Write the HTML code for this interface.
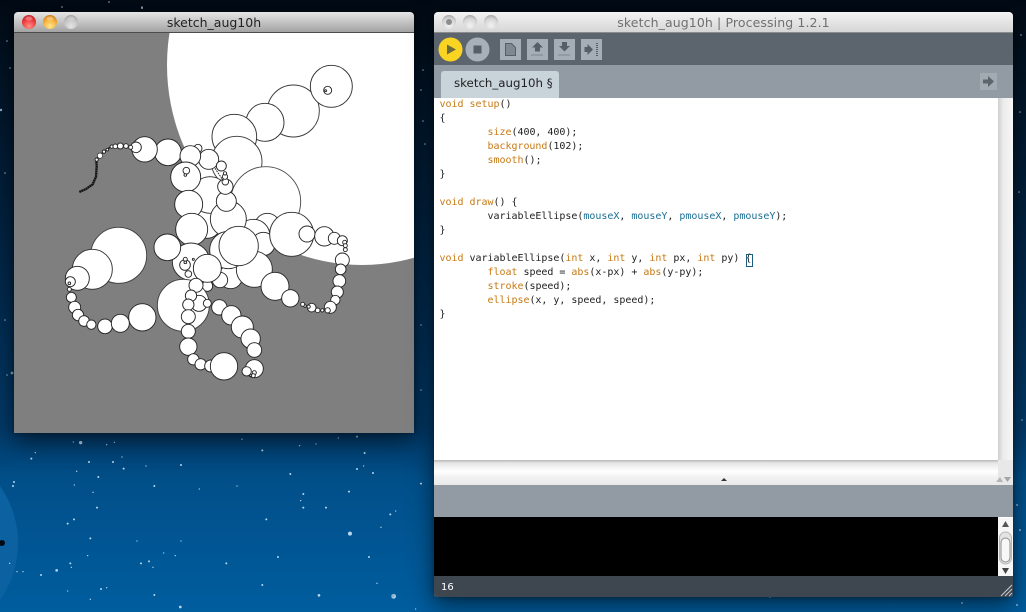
<!DOCTYPE html>
<html><head><meta charset="utf-8"><title>sketch_aug10h</title>
<style>
html,body{margin:0;padding:0}
body{width:1026px;height:612px;overflow:hidden;position:relative;background:linear-gradient(180deg,#020a14 0,#021222 60px,#021b33 150px,#022a4e 300px,#023a69 430px,#014f89 480px,#005d9e 612px);font-family:"DejaVu Sans",sans-serif}
.a{position:absolute}
#bg{position:absolute;left:0;top:0}
.title{position:absolute;top:12px;height:20px;line-height:21px;text-align:center;font-size:12.5px;white-space:pre}
#code{position:absolute;left:439.5px;top:98px;font:10px/14px "DejaVu Sans Mono",monospace;letter-spacing:-.025px;color:#222;white-space:pre;margin:0}
#code b{font-weight:normal;color:#c77a14}
#code i{font-style:normal;color:#1a6f95}
</style></head><body>
<svg id="bg" width="1026" height="612" viewBox="0 0 1026 612">
<circle cx="-81" cy="543" r="99" fill="#0c62a0"/>
<circle cx="2" cy="543" r="3" fill="#010a14"/>
<g fill="#b7d6ee" transform="translate(0,430) scale(.3333)">
<circle cx="242" cy="38" r="5"/><circle cx="220" cy="36" r="2"/><circle cx="320" cy="44" r="2"/><circle cx="343" cy="37" r="2"/><circle cx="106" cy="68" r="2"/><circle cx="94" cy="86" r="3"/><circle cx="267" cy="96" r="3"/><circle cx="339" cy="96" r="3"/><circle cx="366" cy="81" r="2"/><circle cx="371" cy="116" r="3"/><circle cx="438" cy="108" r="2"/><circle cx="543" cy="105" r="3"/><circle cx="230" cy="124" r="2"/><circle cx="295" cy="141" r="3"/><circle cx="42" cy="156" r="3"/><circle cx="39" cy="168" r="3"/><circle cx="463" cy="168" r="3"/><circle cx="223" cy="165" r="2"/><circle cx="279" cy="187" r="2"/><circle cx="598" cy="177" r="2"/><circle cx="711" cy="168" r="2"/><circle cx="787" cy="61" r="3"/><circle cx="726" cy="28" r="2"/><circle cx="899" cy="47" r="2"/><circle cx="948" cy="42" r="2"/><circle cx="1015" cy="24" r="2"/><circle cx="1071" cy="20" r="3"/><circle cx="1094" cy="69" r="3"/><circle cx="871" cy="132" r="3"/><circle cx="1071" cy="117" r="3"/><circle cx="1091" cy="108" r="2"/><circle cx="1119" cy="129" r="3"/><circle cx="1047" cy="185" r="3"/><circle cx="1263" cy="161" r="3"/><circle cx="910" cy="192" r="3"/><circle cx="902" cy="212" r="2"/><circle cx="910" cy="233" r="3"/><circle cx="978" cy="233" r="3"/><circle cx="1171" cy="253" r="3"/><circle cx="1187" cy="243" r="2"/><circle cx="1143" cy="292" r="2"/><circle cx="1050" cy="311" r="6"/><circle cx="799" cy="268" r="3"/><circle cx="291" cy="233" r="3"/><circle cx="222" cy="268" r="3"/><circle cx="203" cy="281" r="3"/><circle cx="271" cy="325" r="3"/><circle cx="411" cy="333" r="2"/><circle cx="543" cy="333" r="2"/><circle cx="491" cy="369" r="2"/><circle cx="526" cy="377" r="2"/><circle cx="263" cy="377" r="2"/><circle cx="447" cy="394" r="3"/><circle cx="423" cy="400" r="3"/><circle cx="459" cy="412" r="2"/><circle cx="679" cy="400" r="3"/><circle cx="834" cy="381" r="3"/><circle cx="211" cy="400" r="3"/><circle cx="214" cy="412" r="2"/><circle cx="170" cy="421" r="4"/><circle cx="123" cy="435" r="3"/><circle cx="51" cy="425" r="2"/><circle cx="69" cy="425" r="2"/><circle cx="29" cy="400" r="2"/><circle cx="303" cy="477" r="3"/><circle cx="320" cy="473" r="2"/><circle cx="203" cy="483" r="2"/><circle cx="463" cy="495" r="3"/><circle cx="271" cy="508" r="2"/><circle cx="787" cy="465" r="3"/><circle cx="957" cy="496" r="4"/><circle cx="1181" cy="499" r="7"/><circle cx="1131" cy="460" r="2"/><circle cx="1107" cy="381" r="3"/><circle cx="541" cy="531" r="4"/><circle cx="1247" cy="537" r="2"/>
</g>
<g fill="#8fb2cc">
<circle cx="142" cy="7" r=".8"/><circle cx="109" cy="2" r=".8"/><circle cx="62" cy="7" r=".8"/><circle cx="142" cy="8" r="1"/><circle cx="7" cy="41" r=".8"/><circle cx="1" cy="110" r="1.2"/><circle cx="10" cy="68" r=".8"/><circle cx="5" cy="173" r=".8"/><circle cx="423" cy="70" r=".8"/><circle cx="423" cy="121" r=".8"/><circle cx="425" cy="144" r=".8"/><circle cx="421" cy="90" r=".8"/><circle cx="1021" cy="35" r=".8"/><circle cx="1020" cy="112" r=".8"/><circle cx="1019" cy="192" r=".8"/><circle cx="1017" cy="505" r="1"/><circle cx="1020" cy="530" r="1"/><circle cx="1017" cy="605" r="1"/><circle cx="962" cy="603" r="1"/><circle cx="770" cy="597" r="1"/><circle cx="393" cy="596" r="1.6"/><circle cx="5" cy="320" r=".8"/><circle cx="12" cy="373" r="1.4"/><circle cx="7" cy="375" r=".8"/><circle cx="421" cy="325" r=".8"/><circle cx="421" cy="390" r=".8"/><circle cx="1022" cy="420" r=".8"/>
</g>
</svg>

<!-- sketch window -->
<div class="a" style="left:14px;top:12px;width:400px;height:421px;border-radius:5px 5px 0 0;box-shadow:0 8px 24px rgba(0,0,0,.55),0 0 6px rgba(0,0,0,.3);background:#7f7f7f"></div>
<div class="a" style="left:14px;top:12px;width:400px;height:20px;border-radius:4px 4px 0 0;background:linear-gradient(180deg,#e6e6e6,#c4c4c4 50%,#a3a3a3);border-bottom:1px solid #4c4c4c"></div>
<div class="title" style="left:14px;width:400px;color:#222">sketch_aug10h</div>

<svg class="a" style="left:0;top:0" width="1026" height="612" viewBox="0 0 1026 612">
<defs>
<radialGradient id="r" cx=".5" cy=".8" r=".8"><stop offset="0" stop-color="#ff8f88"/><stop offset=".6" stop-color="#ee3c3e"/><stop offset="1" stop-color="#c0282c"/></radialGradient>
<radialGradient id="o" cx=".5" cy=".8" r=".8"><stop offset="0" stop-color="#ffe88e"/><stop offset=".6" stop-color="#f6b03a"/><stop offset="1" stop-color="#c9801c"/></radialGradient>
<radialGradient id="g" cx=".5" cy=".8" r=".8"><stop offset="0" stop-color="#e4e4e4"/><stop offset=".6" stop-color="#c6c6c6"/><stop offset="1" stop-color="#a4a4a4"/></radialGradient>
<radialGradient id="g2" cx=".5" cy=".75" r=".75"><stop offset="0" stop-color="#f2f2f2"/><stop offset=".65" stop-color="#d6d6d6"/><stop offset="1" stop-color="#a8a8a8"/></radialGradient>
<clipPath id="c"><rect x="14" y="33" width="400" height="400"/></clipPath>
</defs>
<circle cx="29" cy="22" r="7" fill="url(#r)"/><ellipse cx="29" cy="18.5" rx="3.5" ry="2" fill="#fff" opacity=".3"/>
<circle cx="50" cy="22" r="7" fill="url(#o)"/><ellipse cx="50" cy="18.5" rx="3.5" ry="2" fill="#fff" opacity=".3"/>
<circle cx="71" cy="22" r="7" fill="url(#g)"/><ellipse cx="71" cy="18.5" rx="3.5" ry="2" fill="#fff" opacity=".2"/>
<g clip-path="url(#c)">
<ellipse cx="362" cy="65" rx="195" ry="200" fill="#fff"/>
<g fill="#fff" stroke="#262626" stroke-width="2.8" transform="scale(.33333)">
<circle cx="880" cy="333" r="78" stroke="#3c3c3c"/><circle cx="994" cy="259" r="63" stroke="#303030"/><circle cx="983" cy="271" r="12"/><circle cx="977" cy="272" r="3"/>
<circle cx="795" cy="367" r="57" stroke="#2e2e2e"/><circle cx="703" cy="410" r="67" stroke="#343434"/><circle cx="710" cy="485" r="76" stroke="#3a3a3a"/><circle cx="797" cy="605" r="105" stroke="#4c4c4c"/>
<circle cx="594" cy="445" r="12"/><circle cx="620" cy="670" r="45"/><circle cx="630" cy="585" r="55" stroke="#2c2c2c"/>
<circle cx="504" cy="457" r="40"/><circle cx="434" cy="448" r="38"/><circle cx="408" cy="442" r="16"/>
<circle cx="626" cy="478" r="30"/><circle cx="571" cy="468" r="31"/><circle cx="557" cy="531" r="45"/><circle cx="559" cy="512" r="10"/><circle cx="556" cy="525" r="4"/>
<circle cx="664" cy="498" r="15"/>
<circle cx="566" cy="613" r="42"/>
</g>
<g fill="#fff" stroke="#262626" stroke-width="2.8" transform="translate(0,200) scale(.33333)">
<circle cx="575" cy="88" r="48"/>
<circle cx="802" cy="78" r="38"/><circle cx="760" cy="108" r="50" /><circle cx="790" cy="132" r="35"/>
<circle cx="692" cy="230" r="36"/>
<circle cx="573" cy="185" r="56" stroke="#2c2c2c"/>
</g>
<g fill="#fff" stroke="#262626" stroke-width="2.8" transform="scale(.33333)">
<circle cx="685" cy="657" r="54" stroke="#2c2c2c"/>
</g>
<g fill="#fff" stroke="#262626" stroke-width="2.8" transform="translate(0,200) scale(.33333)">
<circle cx="763" cy="208" r="54" stroke="#2c2c2c"/>
<circle cx="660" cy="240" r="23"/><circle cx="622" cy="258" r="16"/>
<circle cx="685" cy="150" r="56" stroke="#2c2c2c"/><circle cx="716" cy="138" r="59" stroke="#2e2e2e"/>
<circle cx="622" cy="205" r="42"/>
<circle cx="502" cy="142" r="40"/>
<circle cx="555" cy="195" r="16"/><circle cx="565" cy="222" r="10"/><circle cx="556" cy="178" r="6"/><circle cx="556" cy="187" r="4"/><circle cx="580" cy="178" r="3"/>
<circle cx="825" cy="259" r="42"/><circle cx="871" cy="295" r="26"/>
<circle cx="875" cy="103" r="66" stroke="#333"/><circle cx="921" cy="102" r="24"/><circle cx="973" cy="109" r="29"/><circle cx="1003" cy="115" r="18"/><circle cx="1027" cy="122" r="15"/><circle cx="1034" cy="127" r="6"/><circle cx="1036" cy="137" r="6"/><circle cx="1036" cy="149" r="6"/>
<circle cx="1027" cy="180" r="21"/><circle cx="1022" cy="208" r="16"/><circle cx="1018" cy="243" r="19"/><circle cx="1012" cy="276" r="18"/><circle cx="1006" cy="300" r="14"/><circle cx="991" cy="322" r="18"/><circle cx="983" cy="331" r="8"/><circle cx="967" cy="331" r="5"/><circle cx="953" cy="331" r="7"/><circle cx="935" cy="323" r="13"/><circle cx="926" cy="320" r="5"/><circle cx="915" cy="318" r="4"/><circle cx="908" cy="313" r="6"/>
<circle cx="356" cy="166" r="84" stroke="#404040"/><circle cx="277" cy="208" r="60" stroke="#303030"/><circle cx="232" cy="235" r="36"/><circle cx="211" cy="245" r="15"/><circle cx="208" cy="250" r="4"/><circle cx="208" cy="268" r="6"/>
<circle cx="214" cy="292" r="15"/><circle cx="224" cy="322" r="18"/><circle cx="234" cy="345" r="17"/><circle cx="252" cy="363" r="16"/><circle cx="274" cy="374" r="14"/><circle cx="315" cy="379" r="22"/><circle cx="361" cy="370" r="27"/><circle cx="427" cy="352" r="41"/>
<circle cx="550" cy="316" r="78" stroke="#3c3c3c"/><circle cx="597" cy="310" r="24"/><circle cx="622" cy="310" r="12"/>
<circle cx="588" cy="256" r="21"/><circle cx="573" cy="287" r="17"/><circle cx="565" cy="314" r="17"/><circle cx="565" cy="350" r="21"/><circle cx="565" cy="394" r="21"/><circle cx="565" cy="440" r="26"/><circle cx="580" cy="478" r="17"/><circle cx="602" cy="493" r="17"/><circle cx="632" cy="498" r="18"/><circle cx="672" cy="499" r="41"/>
<circle cx="658" cy="322" r="23"/><circle cx="694" cy="346" r="29"/><circle cx="727" cy="381" r="33"/><circle cx="752" cy="416" r="29"/><circle cx="763" cy="450" r="22"/><circle cx="763" cy="506" r="27"/><circle cx="740" cy="514" r="14"/><circle cx="763" cy="518" r="6"/><circle cx="760" cy="527" r="6"/><circle cx="752" cy="526" r="3"/>
</g>
<g fill="#fff" stroke="#262626" stroke-width="2.8" transform="scale(.33333)">
<circle cx="679" cy="604" r="30"/><circle cx="676" cy="560" r="23"/><circle cx="676" cy="545" r="10"/><circle cx="675" cy="530" r="8"/><circle cx="675" cy="520" r="5"/>
<path d="M645 505L672 545" fill="none" stroke-width="3" stroke-dasharray="5 3"/>
<path d="M238 576L258 567 278 553 288 530 290 500 289 480" fill="none" stroke="#111" stroke-width="7" stroke-dasharray="6 1"/>
<path d="M289 480L298 467 315 452 333 440" fill="none" stroke="#111" stroke-width="4"/>
<circle cx="300" cy="467" r="8" stroke-width="2"/><circle cx="290" cy="479" r="5"/><circle cx="312" cy="455" r="5"/><circle cx="322" cy="449" r="4"/><circle cx="335" cy="440" r="5"/><circle cx="346" cy="439" r="7"/><circle cx="361" cy="438" r="9"/><circle cx="378" cy="438" r="7"/><circle cx="392" cy="442" r="6"/>
</g>
</g>
</svg>

<!-- processing window -->
<div class="a" style="left:434px;top:12px;width:579px;height:585px;border-radius:5px 5px 3px 3px;box-shadow:0 8px 24px rgba(0,0,0,.55),0 0 6px rgba(0,0,0,.3);background:#fff"></div>
<div class="a" style="left:434px;top:12px;width:579px;height:20px;border-radius:4px 4px 0 0;background:linear-gradient(180deg,#f4f4f4,#e4e4e4 50%,#d6d6d6);border-bottom:1px solid #8c8c8c"></div>
<svg class="a" style="left:434px;top:12px" width="70" height="20"><circle cx="15" cy="10" r="7" fill="url(#g2)"/><circle cx="15" cy="10" r="3" fill="#8d8d8d"/><circle cx="36" cy="10" r="7" fill="url(#g2)"/><circle cx="57" cy="10" r="7" fill="url(#g2)"/></svg>
<div class="title" style="left:434px;width:579px;color:#707070;letter-spacing:.11px">sketch_aug10h | Processing 1.2.1</div>
<div class="a" style="left:434px;top:33px;width:579px;height:32px;background:#5c646e"></div>
<div class="a" style="left:434px;top:65px;width:579px;height:33px;background:#929aa3"></div>
<div class="a" style="left:441px;top:71px;width:118px;height:27px;background:#c8d3da;border-radius:3px 3px 0 0"></div>
<div class="a" style="left:454px;top:75px;font-size:11.8px;line-height:16px;color:#222;white-space:pre">sketch_aug10h §</div>
<svg class="a" style="left:434px;top:33px" width="180" height="32" viewBox="434 33 180 32">
<circle cx="450.5" cy="49.5" r="12" fill="#f9d423"/><path d="M447 44.5L456 49.5 447 54.5Z" fill="#6b6a3a"/>
<circle cx="477.5" cy="49.5" r="12" fill="#a7afb8"/><rect x="473.5" y="45.5" width="8" height="8" fill="#565e68"/>
<rect x="500" y="39" width="21" height="21" fill="#a5adb6"/><rect x="527" y="39" width="21" height="21" fill="#a5adb6"/><rect x="554" y="39" width="21" height="21" fill="#a5adb6"/><rect x="581" y="39" width="21" height="21" fill="#a5adb6"/>
<path d="M505.5 43.5h6l4 4v8h-10z" fill="#7f8791" stroke="#565e68"/>
<path d="M537.5 42L543 47.5H540V51.5H535V47.5H532Z" fill="#565e68"/><path d="M531.5 55h12" stroke="#565e68" stroke-dasharray="1 1"/>
<path d="M564.5 51.5L570 46H567V42H562V46H559Z" fill="#565e68"/><path d="M558.5 55h12" stroke="#565e68" stroke-dasharray="1 1"/>
<path d="M593 49.5L587.5 44V47H584.5V52H587.5V55Z" fill="#565e68"/><path d="M597 43v13" stroke="#565e68" stroke-width="2" stroke-dasharray="1 1"/>
</svg>
<svg class="a" style="left:980px;top:73px" width="17" height="17"><rect width="17" height="17" fill="#a2aab2"/><path d="M3 6.5H8V3L14 8.5 8 14V10.5H3Z" fill="#5c646e"/></svg>

<pre id="code"><b>void</b> <b>setup</b>()
{
        <b>size</b>(400, 400);
        <b>background</b>(102);
        <b>smooth</b>();
}

<b>void</b> <b>draw</b>() {
        variableEllipse(<i>mouseX</i>, <i>mouseY</i>, <i>pmouseX</i>, <i>pmouseY</i>);
}

<b>void</b> variableEllipse(<b>int</b> x, <b>int</b> y, <b>int</b> px, <b>int</b> py) {
        <b>float</b> speed = <b>abs</b>(x-px) + <b>abs</b>(y-py);
        <b>stroke</b>(speed);
        <b>ellipse</b>(x, y, speed, speed);
}</pre>
<div class="a" style="left:746px;top:254px;width:5px;height:11px;border:1px solid #1a5f7f"></div>

<div class="a" style="left:998px;top:98px;width:15px;height:362px;background:linear-gradient(90deg,#cfcfcf,#ececec 35%,#f6f6f6)"></div>
<div class="a" style="left:434px;top:460px;width:579px;height:25px;background:linear-gradient(180deg,#b9b9b9 0,#e6e6e6 3px,#fff 11px,#f2f2f2 17px,#e9e9e9 25px)"></div>
<div class="a" style="left:998px;top:460px;width:15px;height:25px;background:#e8e8e8"></div>
<svg class="a" style="left:714px;top:473px" width="20" height="12"><path d="M7 8L10 5 13 8Z" fill="#333"/></svg>
<svg class="a" style="left:996px;top:474px" width="18" height="11"><path d="M0 8L4 3 7 8Z" fill="#b5b5b5"/><path d="M8 3H15L11.5 8Z" fill="#a5a5a5"/></svg>
<div class="a" style="left:434px;top:485px;width:579px;height:32px;background:#929aa3"></div>
<div class="a" style="left:434px;top:517px;width:564px;height:59px;background:#000"></div>
<div class="a" style="left:998px;top:518px;width:15px;height:58px;background:#f6f6f6"></div>
<svg class="a" style="left:998px;top:518px" width="15" height="58"><path d="M4 9L7.5 3 11 9Z" fill="#555"/><path d="M4 50H11L7.5 56Z" fill="#444"/><rect x="1.5" y="14" width="12" height="32" rx="6" fill="#e4e4e4" stroke="#b8b8b8"/><rect x="3" y="20" width="9" height="24" rx="4.5" fill="#f7f7f7" stroke="#8e8e8e"/></svg>
<div class="a" style="left:434px;top:576px;width:579px;height:21px;background:#3e4650;border-radius:0 0 3px 3px"></div>
<div class="a" style="left:441px;top:581px;font-size:10px;line-height:14px;color:#fff">16</div>
<svg class="a" style="left:1000px;top:584px" width="13" height="13"><path d="M1 12L12 1M5 12L12 5M9 12L12 9" stroke="#c9cdd1" fill="none"/></svg>
</body></html>
